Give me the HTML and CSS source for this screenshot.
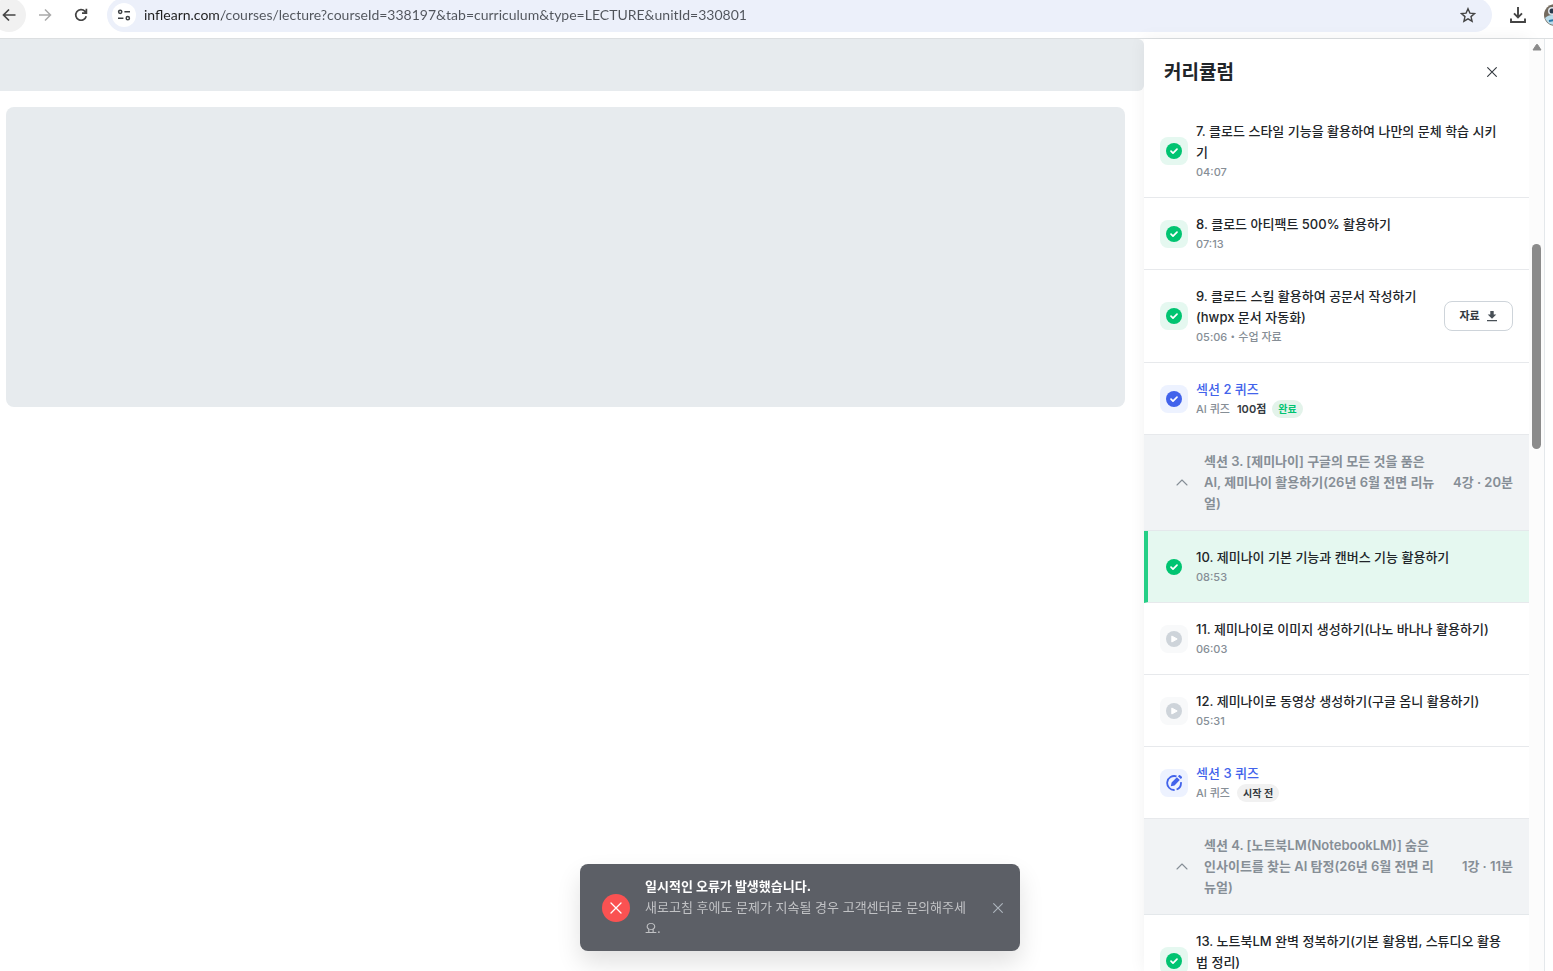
FILE: index.html
```html
<!DOCTYPE html>
<html lang="ko">
<head>
	<title>커리큘럼</title>
	<meta charset="utf-8"/>
	<link rel="stylesheet" href="styles.css">
</head>
<body>
	<!-- shared icons -->
	<svg class="defs" width="0" height="0">
		<symbol id="check" viewBox="0 0 16 16">
			<circle cx="8" cy="8" r="8" fill="currentColor"/>
			<path d="M5 8.2l2 2 4-4" fill="none" stroke="#fff" stroke-width="1.7" stroke-linecap="round" stroke-linejoin="round"/>
		</symbol>
		<symbol id="play" viewBox="0 0 16 16">
			<circle cx="8" cy="8" r="8" fill="currentColor"/>
			<path d="M5.8 5v6L11.2 8z" fill="#fff" stroke="#fff" stroke-linejoin="round"/>
		</symbol>
		<symbol id="close" viewBox="0 0 16 16">
			<path d="M3 3l10 10M13 3L3 13" fill="none" stroke="currentColor" stroke-width="1.3" stroke-linecap="round"/>
		</symbol>
		<symbol id="up" viewBox="0 0 12 12">
			<path d="M1 8l5-5 5 5" fill="none" stroke="currentColor" stroke-width="1.1" stroke-linecap="round" stroke-linejoin="round"/>
		</symbol>
	</svg>

	<div class="toolbar">
		<button class="nav-btn back" aria-label="뒤로">
			<svg width="16" height="16" viewBox="0 0 16 16"><path d="M14.5 8H3M8 2.5L2.5 8 8 13.5" fill="none" stroke="#444" stroke-width="1.7"/></svg>
		</button>
		<button class="nav-btn" aria-label="앞으로">
			<svg width="16" height="16" viewBox="0 0 16 16"><path d="M2 8h11M8 2.5L13.5 8 8 13.5" fill="none" stroke="#aaa" stroke-width="1.5"/></svg>
		</button>
		<button class="nav-btn" aria-label="새로고침">
			<svg width="16" height="16" viewBox="0 0 16 16"><path d="M13.2 9.2A5.3 5.3 0 1 1 12 4.4l1.3 1.4M13.4 1.8v4.4H9" fill="none" stroke="#444" stroke-width="1.7"/></svg>
		</button>
		<div class="address">
			<button class="site-info" aria-label="사이트 정보">
				<svg width="14" height="14" viewBox="0 0 14 14" fill="none" stroke="#3c4043" stroke-width="1.5"><circle cx="3.2" cy="3.8" r="1.6"/><path d="M7.4 3.8H13M1 10.2h5.4"/><circle cx="10.8" cy="10.2" r="1.6"/></svg>
			</button>
			<input class="url" type="text" aria-label="주소" value="inflearn.com/courses/lecture?courseId=338197&amp;tab=curriculum&amp;type=LECTURE&amp;unitId=330801">
			<button class="star" aria-label="북마크">
				<svg width="16" height="16" viewBox="0 0 16 16"><path d="M8 1.7l1.9 4.4 4.7.4-3.6 3.1 1.1 4.6L8 11.8l-4.1 2.4L5 9.6 1.4 6.5l4.7-.4z" fill="none" stroke="#444" stroke-width="1.4"/></svg>
			</button>
		</div>
		<button class="download" aria-label="다운로드">
			<svg width="18" height="18" viewBox="0 0 18 18"><path d="M9 1v10M5 7.4l4 4 4-4M2 12.5V16h14v-3.5" fill="none" stroke="#444" stroke-width="1.9"/></svg>
		</button>
		<button class="profile" aria-label="프로필">
			<svg width="22" height="22" viewBox="0 0 22 22">
				<circle cx="11" cy="11" r="11" fill="#746b5f"/>
				<circle cx="8" cy="7" r="4" fill="#dde5ec"/>
				<circle cx="8" cy="7" r="2.5" fill="#27384b"/>
				<path d="M1 14c4-4 11-4 18 1-3 7-14 9-18-1z" fill="#b9dceb"/>
				<path d="M5 17l6-1" stroke="#2878a8" stroke-width="2"/>
			</svg>
		</button>
	</div>

	<div class="page">
		<main class="lecture">
			<div class="skeleton-header"></div>
			<div class="skeleton-player"></div>
		</main>

		<aside class="curriculum">
			<div class="curriculum-header">
				<h1>커리큘럼</h1>
				<button class="icon-btn" aria-label="닫기"><svg width="14" height="14"><use href="#close"/></svg></button>
			</div>
			<div class="unit">
				<span class="mark green"><svg width="16" height="16"><use href="#check"/></svg></span>
				<div class="info">
					<p class="name">7. 클로드 스타일 기능을 활용하여 나만의 문체 학습 시키기</p>
					<p class="meta">04:07</p>
				</div>
			</div>
			<div class="unit">
				<span class="mark green"><svg width="16" height="16"><use href="#check"/></svg></span>
				<div class="info">
					<p class="name">8. 클로드 아티팩트 500% 활용하기</p>
					<p class="meta">07:13</p>
				</div>
			</div>
			<div class="unit">
				<span class="mark green"><svg width="16" height="16"><use href="#check"/></svg></span>
				<div class="info">
					<p class="name">9. 클로드 스킬 활용하여 공문서 작성하기(hwpx 문서 자동화)</p>
					<p class="meta">05:06・수업 자료</p>
				</div>
				<button class="file-btn">자료
					<svg width="12" height="12" viewBox="0 0 12 12"><path d="M4.3 1h3.4v3.5h2.6L6 8.8 1.7 4.5h2.6zM1 10h10v1.3H1z" fill="#495057"/></svg>
				</button>
			</div>
			<div class="unit quiz">
				<span class="mark blue"><svg width="16" height="16"><use href="#check"/></svg></span>
				<div class="info">
					<p class="name">섹션 2 퀴즈</p>
					<p class="meta">AI 퀴즈 <b class="score">100점</b><span class="badge done">완료</span></p>
				</div>
			</div>
			<button class="section">
				<svg width="12" height="12"><use href="#up"/></svg>
				<span class="section-name">섹션 3. [제미나이] 구글의 모든 것을 품은 AI, 제미나이 활용하기(26년 6월 전면 리뉴얼)</span>
				<span class="section-time">4강 · 20분</span>
			</button>
			<div class="unit active">
				<span class="mark green"><svg width="16" height="16"><use href="#check"/></svg></span>
				<div class="info">
					<p class="name">10. 제미나이 기본 기능과 캔버스 기능 활용하기</p>
					<p class="meta">08:53</p>
				</div>
			</div>
			<div class="unit">
				<span class="mark gray"><svg width="16" height="16"><use href="#play"/></svg></span>
				<div class="info">
					<p class="name">11. 제미나이로 이미지 생성하기(나노 바나나 활용하기)</p>
					<p class="meta">06:03</p>
				</div>
			</div>
			<div class="unit">
				<span class="mark gray"><svg width="16" height="16"><use href="#play"/></svg></span>
				<div class="info">
					<p class="name">12. 제미나이로 동영상 생성하기(구글 옴니 활용하기)</p>
					<p class="meta">05:31</p>
				</div>
			</div>
			<div class="unit quiz">
				<span class="mark blue">
					<svg width="16" height="16" viewBox="0 0 16 16">
						<path d="M10.5 1.4A7 7 0 1 0 8.6 15M10.6 14.5A7 7 0 0 0 14.9 7.2" fill="none" stroke="currentColor" stroke-width="1.8"/>
						<path d="M4.8 11.2l.8-3.7 5.3-5.3 2.9 2.9-5.3 5.3zM11.9 1.2l.8-.8a1.2 1.2 0 0 1 1.7 0l1.2 1.2a1.2 1.2 0 0 1 0 1.7l-.8.8z" fill="currentColor"/>
					</svg>
				</span>
				<div class="info">
					<p class="name">섹션 3 퀴즈</p>
					<p class="meta">AI 퀴즈 <span class="badge">시작 전</span></p>
				</div>
			</div>
			<button class="section">
				<svg width="12" height="12"><use href="#up"/></svg>
				<span class="section-name">섹션 4. [노트북LM(NotebookLM)] 숨은 인사이트를 찾는 AI 탐정(26년 6월 전면 리뉴얼)</span>
				<span class="section-time">1강 · 11분</span>
			</button>
			<div class="unit">
				<span class="mark green"><svg width="16" height="16"><use href="#check"/></svg></span>
				<div class="info">
					<p class="name">13. 노트북LM 완벽 정복하기(기본 활용법, 스튜디오 활용법 정리)</p>
					<p class="meta"></p>
				</div>
			</div>
		</aside>

		<div class="scrollbar">
			<svg width="10" height="8" viewBox="0 0 10 8"><path d="M4.5 1.5h1L9 7H1z" fill="#8b8b8b" stroke="#8b8b8b" stroke-linejoin="round"/></svg>
			<div class="thumb"></div>
		</div>
	</div>

	<div class="toast" role="alert">
		<span class="toast-icon"><svg width="16" height="16"><use href="#close"/></svg></span>
		<div class="toast-text">
			<strong>일시적인 오류가 발생했습니다.</strong>
			<p>새로고침 후에도 문제가 지속될 경우 고객센터로 문의해주세요.</p>
		</div>
		<button class="icon-btn" aria-label="알림 닫기"><svg width="14" height="14"><use href="#close"/></svg></button>
	</div>
</body>
</html>
```
FILE: styles.css
```css
*{
	box-sizing: border-box;
}

html,body{
	margin: 0;
	height: 100%;
	overflow: hidden;
}

body{
	display: flex;
	flex-direction: column;
	background: #fff;
	color: #212529;
	font-family: Inter, "Noto Sans CJK KR", sans-serif;
	font-size: 13px;
	line-height: 21px;
}

h1,p{
	margin: 0;
}

button{
	display: flex;
	align-items: center;
	justify-content: center;
	flex: none;
	margin: 0;
	padding: 0;
	border: 0;
	background: none;
	color: inherit;
	font: inherit;
}

svg{
	display: block;
	flex: none;
}

.defs{
	position: absolute;
}

/* browser bar */
.toolbar{
	display: flex;
	flex: none;
	height: 39px;
	border-bottom: 1px solid #dcdfe1;
	overflow: hidden;
}

.toolbar > *{
	height: 34px;
	margin-top: -2px;
}

.nav-btn{
	width: 34px;
	margin-right: 2px;
	border-radius: 17px;
}

.back{
	margin-left: -8px;
	background: #f1f1f1;
}

.address{
	display: flex;
	align-items: center;
	flex: 1;
	margin-left: 7px;
	padding: 0 16px 0 5px;
	border-radius: 17px;
	background: #ecf0fa;
}

.site-info{
	width: 24px;
	height: 24px;
	border-radius: 12px;
	background: #fff;
}

.url{
	flex: 1;
	min-width: 0;
	margin: 0 8px;
	padding: 0;
	border: 0;
	outline: 0;
	/* domain darker than the path */
	background: linear-gradient(to right, #1f1f1f 78px, #50545b 78px);
	-webkit-background-clip: text;
	background-clip: text;
	-webkit-text-fill-color: transparent;
	font-family: Lato, sans-serif;
	font-size: 14px;
	line-height: 20px;
}

.download{
	width: 18px;
	margin-left: 17px;
}

.profile{
	width: 9px;
	margin-left: 17px;
	justify-content: flex-start;
	overflow: hidden;
}

/* page */
.page{
	display: flex;
	flex: 1;
	min-height: 0;
	padding-right: 8px;
}

.lecture{
	flex: 1;
}

.skeleton-header{
	height: 52px;
	border-radius: 0 6px 6px 0;
	background: #e7ebee;
}

.skeleton-player{
	height: 300px;
	margin: 16px 19px 0 6px;
	border-radius: 8px;
	background: #e7ebee;
}

.curriculum{
	display: flex;
	flex-direction: column;
	flex: none;
	width: 385px;
	overflow: hidden;
	background: #fff;
	box-shadow: 0 0 16px rgba(0,0,0,.06);
}

.curriculum-header{
	display: flex;
	align-items: center;
	justify-content: space-between;
	flex: none;
	height: 66px;
	padding: 0 30px 0 20px;
}

.curriculum-header h1{
	padding-top: 2px;
	font-size: 19px;
	line-height: 28px;
	font-weight: 700;
}

.icon-btn{
	width: 14px;
	height: 14px;
	color: #343a40;
}

.unit{
	display: flex;
	align-items: center;
	flex: none;
	gap: 8px;
	padding: 16px;
	border-bottom: 1px solid #e7e9ec;
}

.mark{
	display: flex;
	align-items: center;
	justify-content: center;
	flex: none;
	width: 28px;
	height: 28px;
	border-radius: 8px;
}

.green{
	background: #e5f8f0;
	color: #00c471;
}

.blue{
	background: #edf2ff;
	color: #4263eb;
}

.gray{
	background: #f8f9fa;
	color: #ced4da;
}

.info{
	flex: 1;
	min-width: 0;
	margin-right: 8px;
}

.name{
	font-weight: 500;
}

.meta{
	display: flex;
	align-items: center;
	height: 18px;
	color: #868e96;
	font-size: 11px;
	line-height: 18px;
	font-weight: 500;
}

.quiz .name{
	color: #4263eb;
}

.score{
	margin-left: 7px;
	color: #343a40;
	font-weight: 600;
}

.badge{
	margin-left: 7px;
	padding: 0 6px;
	border-radius: 9px;
	background: #f1f1f1;
	color: #343a40;
	font-size: 10px;
	font-weight: 600;
}

.done{
	margin-left: 6px;
	background: #e3f3ea;
	color: #00c471;
	font-weight: 700;
}

.file-btn{
	gap: 6px;
	width: 69px;
	height: 30px;
	border: 1px solid #ced4da;
	border-radius: 8px;
	color: #343a40;
	font-size: 11px;
	font-weight: 600;
}

.section{
	gap: 12px;
	padding: 16px 16px 16px 32px;
	border-bottom: 1px solid #e4e8eb;
	background: #f1f3f5;
	color: #868e96;
	font-weight: 600;
	text-align: left;
}

.section svg{
	margin-right: 4px;
}

.section-name{
	flex: 1;
}

.section-time{
	min-width: 61px;
	text-align: right;
}

.active{
	padding-left: 12px;
	border-left: 4px solid #25cf86;
	background: #e5f8f0;
	background-clip: padding-box;
}

.scrollbar{
	display: flex;
	flex-direction: column;
	align-items: center;
	flex: none;
	width: 16px;
	padding-top: 4px;
	border-right: 1px solid #e4e8eb;
	background: #fcfcfc;
}

.thumb{
	width: 9px;
	height: 205px;
	margin-top: 193px;
	border-radius: 5px;
	background: #8b8b8b;
}

/* error message */
.toast{
	position: fixed;
	left: 580px;
	bottom: 20px;
	display: flex;
	align-items: center;
	width: 440px;
	padding: 12px 15px 12px 22px;
	border-radius: 8px;
	background: #5c5f66;
	color: #fff;
	box-shadow: 0 12px 24px rgba(0,0,0,.12);
}

.toast-icon{
	display: flex;
	align-items: center;
	justify-content: center;
	flex: none;
	width: 28px;
	height: 28px;
	margin-right: 15px;
	border-radius: 14px;
	background: #fa5252;
}

.toast-text{
	flex: 1;
	margin-right: 18px;
}

.toast strong{
	font-weight: 700;
}

.toast p{
	color: #c1c2c5;
}

.toast .icon-btn{
	color: #adb5bd;
}
```
